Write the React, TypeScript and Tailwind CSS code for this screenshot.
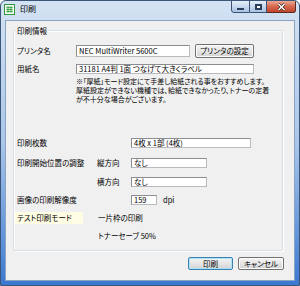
import React from 'react';

const jp = "font-['Noto_Sans_CJK_JP','Noto_Sans_CJK_SC',sans-serif] [font-feature-settings:'palt']";

const Field: React.FC<{ w: string; h?: string; children?: React.ReactNode }> = ({ w, h = 'h-[10px]', children }) => (
  <div className={`${w} ${h} bg-white border border-[#8b8d90] border-b-[#b8babd] border-r-[#b8babd] flex items-center pl-[2px] text-[7.5px] leading-none text-black overflow-hidden whitespace-nowrap`}>
    {children}
  </div>
);

const Btn: React.FC<{ w: string; primary?: boolean; children: React.ReactNode }> = ({ w, primary, children }) => (
  <div
    className={`${w} h-[13px] rounded-[2px] border ${
      primary ? 'border-[#3c7fb1] shadow-[inset_0_0_0_1px_#a9e4fa]' : 'border-[#707070] shadow-[inset_0_0_0_1px_#fcfcfc]'
    } bg-gradient-to-b from-[#f4f4f4] via-[#e6e6e6] to-[#d2d2d2] flex items-center justify-center text-[7.5px] leading-none text-black`}
  >
    {children}
  </div>
);

export default function App() {
  return (
    <div className={`w-[300px] h-[286px] ${jp} select-none`}>
      <div className="w-full h-full rounded-t-[6px] border border-[#3b5678] bg-gradient-to-b from-[#d4e3f3] via-[#a9c6e9] to-[#3a78d0] flex flex-col overflow-hidden">
        {/* title bar */}
        <div className="relative h-[19px] flex items-start shrink-0">
          <svg className="ml-[3px] mt-[3px]" width="11" height="11" viewBox="0 0 11 11">
            <rect x="0.5" y="0.5" width="10" height="10" fill="#ffffff" stroke="#2e9a3c" />
            <rect x="2" y="2" width="7" height="7" fill="#d7f0d2" />
            <path d="M2.5 3.5h6M2.5 5.5h6M2.5 7.5h6M4 2.5v6M7 2.5v6" stroke="#2e9a3c" strokeWidth="0.8" />
          </svg>
          <span className="ml-[5px] mt-[3px] text-[8px] leading-[10px] text-black">印刷</span>
          <div className="absolute right-[3px] top-[-1px] flex">
            <div className="w-[19px] h-[13px] rounded-bl-[3px] border border-[#3d5272] bg-gradient-to-b from-[#e5eef8] via-[#c6d8ec] to-[#a9c3e2] flex items-center justify-center">
              <div className="w-[7px] h-[2px] bg-white border border-[#2b3e5a] mt-[4px]" />
            </div>
            <div className="w-[17px] h-[13px] border border-l-0 border-[#3d5272] bg-gradient-to-b from-[#e5eef8] via-[#c6d8ec] to-[#a9c3e2] flex items-center justify-center">
              <div className="w-[7px] h-[6px] bg-white border border-[#2b3e5a] shadow-[inset_0_0_0_1px_#2b3e5a]" />
            </div>
            <div className="w-[29px] h-[13px] rounded-br-[3px] border border-l-0 border-[#5a2a22] bg-gradient-to-b from-[#eaa894] via-[#d6684f] to-[#c2452c] flex items-center justify-center">
              <svg width="9" height="8" viewBox="0 0 9 8">
                <path d="M1.5 1l6 6M7.5 1l-6 6" stroke="#2b1410" strokeWidth="2.6" />
                <path d="M1.5 1l6 6M7.5 1l-6 6" stroke="#ffffff" strokeWidth="1.6" />
              </svg>
            </div>
          </div>
        </div>

        {/* client area */}
        <div className="mx-[4px] h-[261px] bg-[#f0f0f0] border border-[#8ba3c2] flex flex-col shrink-0 text-[7.5px] leading-none text-black">
          {/* group box */}
          <div className="relative ml-[7px] mt-[9px] w-[270px] h-[221px] border border-[#d5dfe5] rounded-[2px] shadow-[inset_1px_1px_0_#ffffff,1px_1px_0_#ffffff] flex flex-col">
            <span className="absolute left-[2px] top-[-5px] px-[1px] bg-[#f0f0f0] text-[7.5px] leading-[9px]">印刷情報</span>

            {/* printer */}
            <div className="mt-[13px] h-[14px] flex items-center">
              <span className="w-[62px] pl-[3px]">プリンタ名</span>
              <Field w="w-[114px]" h="h-[12px]">NEC MultiWriter 5600C</Field>
              <div className="ml-[5px]">
                <div className="w-[59px] h-[14px] rounded-[2px] border border-[#707070] shadow-[inset_0_0_0_1px_#fcfcfc] bg-gradient-to-b from-[#f4f4f4] via-[#e6e6e6] to-[#d2d2d2] flex items-center justify-center">
                  プリンタの設定
                </div>
              </div>
            </div>

            {/* paper */}
            <div className="mt-[6px] h-[10px] flex items-center">
              <span className="w-[62px] pl-[3px]">用紙名</span>
              <Field w="w-[178px]">31181 A4判 1面 つなげて大きくラベル</Field>
            </div>

            {/* note */}
            <div className="mt-[3px] ml-[62px] text-[7px] leading-[9px] whitespace-nowrap">
              <div>※「厚紙」モード設定にて手差し給紙される事をおすすめします。</div>
              <div>厚紙設定ができない機種では、給紙できなかったり、トナーの定着</div>
              <div>が不十分な場合がございます。</div>
            </div>

            {/* copies */}
            <div className="mt-[34px] h-[10px] flex items-center">
              <span className="w-[117px] pl-[3px]">印刷枚数</span>
              <Field w="w-[120px]">4枚 x 1部 (4枚)</Field>
            </div>

            {/* position */}
            <div className="mt-[10px] h-[10px] flex items-center">
              <span className="w-[83px] pl-[3px]">印刷開始位置の調整</span>
              <span className="w-[34px]">縦方向</span>
              <Field w="w-[76px]">なし</Field>
            </div>
            <div className="mt-[9px] h-[10px] flex items-center">
              <span className="w-[83px]" />
              <span className="w-[34px]">横方向</span>
              <Field w="w-[76px]">なし</Field>
            </div>

            {/* dpi */}
            <div className="mt-[8px] h-[10px] flex items-center">
              <span className="w-[117px] pl-[3px]">画像の印刷解像度</span>
              <Field w="w-[26px]">159</Field>
              <span className="ml-[6px]">dpi</span>
            </div>

            {/* test mode */}
            <div className="mt-[7px] h-[12px] flex items-center">
              <span className="ml-[1px] w-[68px] h-[12px] bg-[#fffde3] flex items-center pl-[2px]">テスト印刷モード</span>
              <span className="ml-[15px]">一片枠の印刷</span>
            </div>
            <div className="mt-[7px] h-[10px] flex items-center">
              <span className="ml-[84px]">トナーセーブ 50%</span>
            </div>
          </div>

          {/* buttons */}
          <div className="mt-[6px] mr-[10px] flex justify-end gap-[5px]">
            <Btn w="w-[45px]" primary>印刷</Btn>
            <Btn w="w-[46px]">キャンセル</Btn>
          </div>
        </div>
      </div>
    </div>
  );
}
